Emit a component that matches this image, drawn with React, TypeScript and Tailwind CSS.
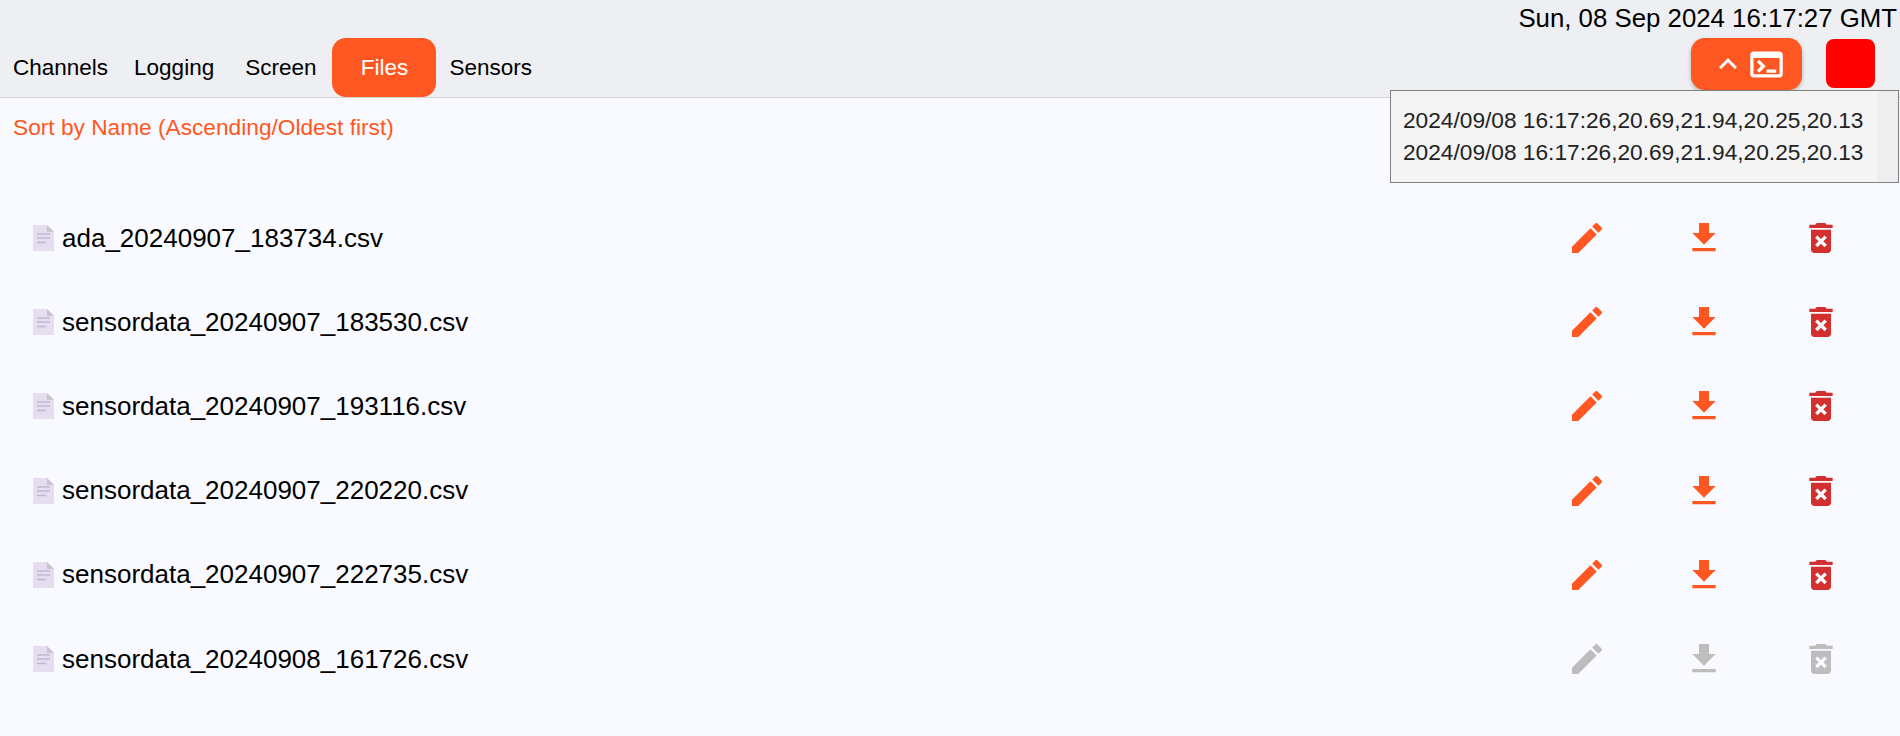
import React from 'react'

const files = [
  { name: 'ada_20240907_183734.csv', active: true },
  { name: 'sensordata_20240907_183530.csv', active: true },
  { name: 'sensordata_20240907_193116.csv', active: true },
  { name: 'sensordata_20240907_220220.csv', active: true },
  { name: 'sensordata_20240907_222735.csv', active: true },
  { name: 'sensordata_20240908_161726.csv', active: false },
]

function Icon({ d, className }: { d: string; className: string }) {
  return (
    <svg viewBox="0 0 24 24" className={className} fill="currentColor">
      <path d={d} />
    </svg>
  )
}

const editPath = 'M3 17.25V21h3.75L17.81 9.94l-3.75-3.75L3 17.25zM20.71 7.04c.39-.39.39-1.02 0-1.41l-2.34-2.34c-.39-.39-1.02-.39-1.41 0l-1.83 1.83 3.75 3.75 1.83-1.83z'
const downloadPath = 'M19 9h-4V3H9v6H5l7 7 7-7zM5 18v2h14v-2H5z'
const deletePath = 'M6 19c0 1.1.9 2 2 2h8c1.1 0 2-.9 2-2V7H6v12zm2.46-7.12l1.41-1.41L12 12.59l2.12-2.12 1.41 1.41L13.41 14l2.12 2.12-1.41 1.41L12 15.41l-2.12 2.12-1.41-1.41L10.59 14l-2.13-2.12zM15.5 4l-1-1h-5l-1 1H5v2h14V4z'

function FileIcon() {
  return (
    <svg viewBox="0 0 21 26" className="w-[21px] h-[26px] shrink-0">
      <path d="M0 0h14l7 7v19H0z" fill="#e6ddf0" />
      <path d="M14 0l7 7h-7z" fill="#c9c3d1" />
      <path d="M4 9h13M4 13h13M4 17.500h9" stroke="#c2b9d0" strokeWidth="1.300" />
    </svg>
  )
}

export default function App() {
  return (
    <div className="relative min-h-[736px] bg-[#f9faff] text-black font-['Liberation_Sans',Arial,sans-serif]">
      {/* Top bar */}
      <div className="h-[98px] bg-[#eeeff2] border-b border-[#d4d4d6] flex flex-col">
        <div className="h-[38px] text-right text-[25.800px] leading-[37px] pr-[3px]">Sun, 08 Sep 2024 16:17:27 GMT</div>
        <div className="flex items-start flex-1">
          <div className="flex items-start text-[22.500px] leading-[59px]">
            <div className="px-[13px]">Channels</div>
            <div className="pl-[13px] pr-[18px]">Logging</div>
            <div className="pl-[13px] pr-[16px]">Screen</div>
            <div className="w-[104px] h-[59px] rounded-[14px] bg-[#ff5722] text-white text-center">Files</div>
            <div className="px-[13px]">Sensors</div>
          </div>
          <div className="ml-auto flex items-start pr-[25px]">
            <div className="w-[111px] h-[52px] rounded-[14px] bg-[#ff5722] text-white flex items-center pl-[19px] gap-[1px] shadow-[0_2px_4px_rgba(0,0,0,0.25)]">
              <Icon d="M12 8l-6 6 1.410 1.410L12 10.830l4.590 4.580L18 14z" className="w-[36px] h-[36px]" />
              <Icon d="M20 4H4c-1.100 0-2 .9-2 2v12c0 1.100.9 2 2 2h16c1.100 0 2-.9 2-2V6c0-1.100-.9-2-2-2zm0 14H4V8h16v10zm-2-1h-6v-2h6v2zM7.500 17l-1.410-1.410L8.670 13l-2.590-2.590L7.500 9l4 4-4 4z" className="w-[39px] h-[39px]" />
            </div>
            <div className="ml-[24px] mt-[1px] w-[49px] h-[49px] rounded-[8px] bg-[#ff0000]" />
          </div>
        </div>
      </div>

      {/* Serial console overlay */}
      <div className="absolute top-[90px] left-[1390px] w-[509px] h-[93px] border border-[#808080] bg-[#f4f4f4] flex">
        <div className="flex-1 pl-[12px] pt-[13px] text-[22.700px] leading-[32px] text-[#222222]">
          <div>2024/09/08 16:17:26,20.69,21.94,20.25,20.13</div>
          <div>2024/09/08 16:17:26,20.69,21.94,20.25,20.13</div>
        </div>
        <div className="w-[21px] bg-[#eeeeee]" />
      </div>

      {/* File list */}
      <div className="pl-[13px] pt-[17px] text-[22.700px] leading-[24px] text-[#ff5722]">Sort by Name (Ascending/Oldest first)</div>
      <div className="mt-[57px] flex flex-col">
        {files.map((file) => (
          <div key={file.name} className="h-[84.200px] flex items-center pl-[33px]">
            <FileIcon />
            <span className="ml-[8px] text-[26px]">{file.name}</span>
            <div className="ml-auto flex items-center gap-[77px] pr-[59px]">
              <Icon d={editPath} className={`w-[40px] h-[40px] ${file.active ? 'text-[#ff5722]' : 'text-[#bdbdbd]'}`} />
              <Icon d={downloadPath} className={`w-[40px] h-[40px] ${file.active ? 'text-[#ff5722]' : 'text-[#bdbdbd]'}`} />
              <Icon d={deletePath} className={`w-[40px] h-[40px] ${file.active ? 'text-[#d32f2f]' : 'text-[#bdbdbd]'}`} />
            </div>
          </div>
        ))}
      </div>
    </div>
  )
}
